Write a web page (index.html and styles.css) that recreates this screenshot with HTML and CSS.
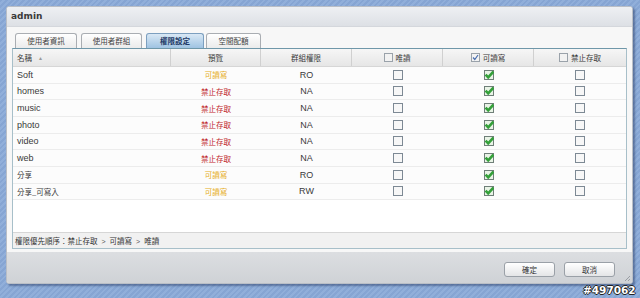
FILE: index.html
```html
<!DOCTYPE html>
<html lang="zh-Hant">
<head>
<meta charset="utf-8">
<title>admin</title>
<link rel="stylesheet" href="styles.css">
</head>
<body>
<div class="window">
  <div class="titlebar">admin</div>
  <div class="content">
    <div class="tabs">
      <div class="tab t1 cjk">使用者資訊</div>
      <div class="tab t2 cjk">使用者群組</div>
      <div class="tab t3 active cjk">權限設定</div>
      <div class="tab t4 cjk">空間配額</div>
    </div>
    <div class="grid">
      <div class="row head">
        <div class="cell name"><span class="cjk">名稱</span><span class="sort">▲</span></div>
        <div class="cell"><span class="cjk">預覽</span></div>
        <div class="cell"><span class="cjk">群組權限</span></div>
        <div class="cell"><svg class="cb hcb" viewBox="0 0 9 9"><rect x="0.5" y="0.5" width="8" height="8" fill="#f2f2f2" stroke="#9aa2aa"/></svg><span class="cjk">唯讀</span></div>
        <div class="cell"><svg class="cb hcb" viewBox="0 0 9 9"><rect x="0.5" y="0.5" width="8" height="8" fill="#f2f2f2" stroke="#9aa2aa"/><path d="M2 4.5 L3.8 6.5 L7 2" fill="none" stroke="#4a6fb0" stroke-width="1.2"/></svg><span class="cjk">可讀寫</span></div>
        <div class="cell last"><svg class="cb hcb" viewBox="0 0 9 9"><rect x="0.5" y="0.5" width="8" height="8" fill="#f2f2f2" stroke="#9aa2aa"/></svg><span class="cjk">禁止存取</span></div>
      </div>
      <div class="body" id="rows"></div>
      <div class="note cjk">權限優先順序：禁止存取<span class="gt">&gt;</span>可讀寫<span class="gt">&gt;</span>唯讀</div>
    </div>
  </div>
  <div class="footer">
    <button class="btn cjk">確定</button>
    <button class="btn cjk">取消</button>
  </div>
  <svg class="grip" viewBox="0 0 8 8"><path d="M7 2 L2 7 M7 5 L5 7" stroke="#9a9ea4" stroke-width="1"/></svg>
</div>
<div class="mark">#497062</div>
<script>
var data = [
  ["Soft","rw","RO"],["homes","na","NA"],["music","na","NA"],["photo","na","NA"],
  ["video","na","NA"],["web","na","NA"],["分享","rw","RO"],["分享_可寫入","rw","RW"]
];
var empty = '<svg class="cb" viewBox="0 0 10 10"><rect x="0.5" y="0.5" width="9" height="9" fill="#f7f7f7" stroke="#7d8994"/></svg>';
var check = '<svg class="cb" viewBox="0 0 10 10"><rect x="0.5" y="0.5" width="9" height="9" fill="#e9f3e6" stroke="#6f7f78"/><path d="M1.6 4.6 L4.2 7.4 L9.4 1.6" fill="none" stroke="#34a03a" stroke-width="2.6"/></svg>';
var html = "";
data.forEach(function(d){
  var pv = d[1] === "rw" ? '<span class="cjk rw">可讀寫</span>' : '<span class="cjk na">禁止存取</span>';
  var nm = /[^\x00-\x7f]/.test(d[0]) ? '<span class="cjk">'+d[0]+'</span>' : d[0];
  html += '<div class="row r"><div class="cell name">'+nm+'</div><div class="cell">'+pv+'</div><div class="cell">'+d[2]+'</div><div class="cell">'+empty+'</div><div class="cell">'+check+'</div><div class="cell last">'+empty+'</div></div>';
});
document.getElementById("rows").innerHTML = html;
</script>
</body>
</html>
```
FILE: styles.css
```css
html, body {
  margin: 0;
  padding: 0;
}
body {
  width: 640px;
  height: 298px;
  overflow: hidden;
  position: relative;
  background: repeating-linear-gradient(135deg, #86a5d3 0 2px, #91afda 2px 4px);
  font-family: "Liberation Sans", Arial, "Noto Sans CJK TC", sans-serif;
  font-size: 9px;
  color: #3a3a3a;
}
.cjk {
  font-family: "Noto Sans CJK TC", "Noto Sans CJK SC", sans-serif;
  font-size: 7.5px;
}
.window {
  position: relative;
  box-sizing: border-box;
  margin: 6px 0 0 6px;
  width: 627px;
  height: 278px;
  border: 1px solid #b9bec6;
  border-radius: 3px;
  box-shadow: 2px 2px 2px rgba(30, 50, 90, 0.45);
  display: flex;
  flex-direction: column;
  background: #f6f6f6;
  overflow: hidden;
}
.titlebar {
  height: 19px;
  line-height: 19px;
  padding-left: 4px;
  font-family: "DejaVu Sans", sans-serif;
  font-weight: bold;
  font-size: 9px;
  color: #3a3a3a;
  background: linear-gradient(#eef0f3, #dde0e5);
  border-bottom: 1px solid #d4d7dc;
}
.content {
  flex: 1;
  display: flex;
  flex-direction: column;
  padding: 6px 5px 3px 5px;
  background: #f7f7f7;
}
.tabs {
  display: flex;
  height: 15px;
  padding-left: 3px;
  gap: 4px;
}
.tab {
  box-sizing: border-box;
  height: 15px;
  line-height: 13px;
  text-align: center;
  color: #444;
  border: 1px solid #a9adb2;
  border-bottom: none;
  border-radius: 3px 3px 0 0;
  background: linear-gradient(#ffffff, #ebebeb);
}
.t1 { width: 62px; }
.t2 { width: 61px; }
.t3 { width: 58px; }
.t4 { width: 55px; margin-left: -2px; }
.tab.active {
  font-weight: bold;
  color: #1f3a66;
  border-color: #7c9fbf;
  background: linear-gradient(#d9e8f5, #9fc3e2);
}
.grid {
  flex: 1;
  display: flex;
  flex-direction: column;
  border: 1px solid #a7bfc9;
  border-top: 1px solid #6f97a9;
  background: #fff;
}
.row {
  display: grid;
  grid-template-columns: 158px 90px 91px 91px 91px 1fr;
}
.row.head {
  height: 17px;
  border-bottom: 1px solid #d6d6d6;
  background: linear-gradient(#f6f6f6, #e6e6e6);
}
.head .cell {
  border-right: 1px solid #d0d0d0;
}
.head .cell.last {
  border-right: none;
}
.cell {
  display: flex;
  align-items: center;
  justify-content: center;
  gap: 3px;
  overflow: hidden;
  white-space: nowrap;
}
.cell.name {
  justify-content: flex-start;
  padding-left: 4px;
}
.sort {
  font-size: 5px;
  color: #999;
  margin-left: 3px;
}
.body {
  flex: 1;
}
.row.r {
  box-sizing: border-box;
  height: 16.67px;
  border-bottom: 1px solid #ececec;
  background: #fcfcfc;
}
.rw { color: #e6ad22; }
.na { color: #c0282d; }
.cb {
  width: 10px;
  height: 10px;
  display: block;
}
.hcb {
  width: 9px;
  height: 9px;
}
.note {
  height: 15px;
  line-height: 15px;
  padding-left: 2px;
  border-top: 1px solid #d6d6d6;
  background: #f1f1f1;
  color: #333;
  white-space: nowrap;
}
.gt {
  font-family: "Liberation Sans", sans-serif;
  font-size: 7px;
  color: #555;
  margin: 0 4px;
}
.footer {
  height: 31px;
  display: flex;
  align-items: center;
  justify-content: flex-end;
  gap: 9px;
  padding-right: 17px;
  background: linear-gradient(#dcdee1, #cfd2d6);
}
.btn {
  box-sizing: border-box;
  width: 51px;
  height: 15px;
  padding: 0;
  margin-top: 3px;
  border: 1px solid #9aa0a7;
  border-radius: 3px;
  background: linear-gradient(#ffffff, #e4e5e7);
  color: #333;
  line-height: 13px;
}
.grip {
  position: absolute;
  right: 1px;
  bottom: 1px;
  width: 8px;
  height: 8px;
}
.mark {
  position: absolute;
  left: 583px;
  top: 284px;
  font-family: "DejaVu Sans", sans-serif;
  font-weight: bold;
  font-size: 10.5px;
  color: #fff;
  text-shadow: -1px 0 #222, 1px 0 #222, 0 -1px #222, 0 1px #222;
}
```
